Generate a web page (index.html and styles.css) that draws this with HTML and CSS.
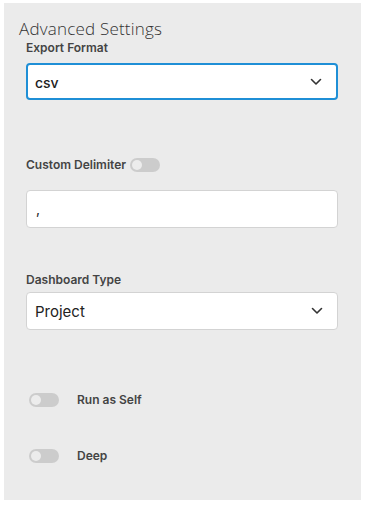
FILE: index.html
```html
<!DOCTYPE html>
<html lang="en">
<head>
    <meta charset="UTF-8">
    <meta name="viewport" content="width=device-width, initial-scale=1.0">
    <title>Advanced Settings</title>
    <link rel="stylesheet" href="styles.css">
</head>
<body>
    <div class="panel">
        <h2 class="panel-title">Advanced Settings</h2>

        <!-- export format -->
        <div class="field">
            <label class="field-label">Export Format</label>
            <div class="select focused">
                <span class="select-value">csv</span>
                <svg class="chevron" width="12" height="8" viewBox="0 0 12 8"><path d="M1.5 1.5 L6 6 L10.5 1.5" fill="none" stroke="#333" stroke-width="1.6" stroke-linecap="round" stroke-linejoin="round"/></svg>
            </div>
        </div>

        <div class="field delimiter">
            <div class="label-row">
                <label class="field-label">Custom Delimiter</label>
                <span class="toggle"></span>
            </div>
            <div class="text-input">,</div>
        </div>

        <div class="field dashboard">
            <label class="field-label">Dashboard Type</label>
            <div class="select">
                <span class="select-value plain">Project</span>
                <svg class="chevron" width="12" height="8" viewBox="0 0 12 8"><path d="M1.5 1.5 L6 6 L10.5 1.5" fill="none" stroke="#333" stroke-width="1.6" stroke-linecap="round" stroke-linejoin="round"/></svg>
            </div>
        </div>

        <div class="switch-row first">
            <span class="toggle"></span>
            <span class="switch-label">Run as Self</span>
        </div>
        <div class="switch-row">
            <span class="toggle"></span>
            <span class="switch-label">Deep</span>
        </div>
    </div>
</body>
</html>
```

FILE: styles.css
```css
body {
    font-family: Inter, "Liberation Sans", sans-serif;
    background-color: #ffffff;
    margin: 0;
    padding: 3px 5px 6px 4px;
}

.panel {
    background-color: #ebebeb;
    height: 497px;
    box-sizing: border-box;
    padding: 15px 23px 0 22px;
}

.panel-title {
    font-family: "Open Sans", sans-serif;
    font-weight: 300;
    font-size: 17px;
    color: #333333;
    margin: 0 0 0 -7px;
    line-height: 22px;
    letter-spacing: 0.2px;
}

.field-label {
    display: block;
    font-size: 12px;
    font-weight: 600;
    color: #444444;
    line-height: 16px;
}

.field {
    display: flex;
    flex-direction: column;
}

.field > .field-label {
    margin-bottom: 7px;
}

.select {
    height: 38px;
    box-sizing: border-box;
    background-color: #ffffff;
    border: 1px solid #d3d3d3;
    border-radius: 4px;
    display: flex;
    align-items: center;
    justify-content: space-between;
    padding: 0 14px 0 8px;
}

.select.focused {
    border: 2px solid #1f8fd6;
    height: 37px;
    padding-left: 7px;
}

.select-value {
    font-size: 14px;
    font-weight: 500;
    color: #222222;
    padding-top: 2px;
}

.select-value.plain {
    font-size: 15px;
    font-weight: 400;
    padding-top: 0;
}

.delimiter {
    margin-top: 57px;
}

.label-row {
    display: flex;
    align-items: center;
    gap: 4px;
    margin-bottom: 17px;
}

.text-input {
    height: 38px;
    box-sizing: border-box;
    background-color: #ffffff;
    border: 1px solid #d3d3d3;
    border-radius: 4px;
    padding: 9px 9px;
    font-size: 14px;
    color: #222222;
}

.dashboard {
    margin-top: 44px;
}

.dashboard > .field-label {
    margin-bottom: 4px;
}

.toggle {
    display: inline-block;
    width: 30px;
    height: 14px;
    border-radius: 7px;
    background-color: #cccccc;
    position: relative;
}

.toggle::after {
    content: "";
    position: absolute;
    left: 2px;
    top: 2px;
    width: 10px;
    height: 10px;
    border-radius: 50%;
    background-color: #ececec;
}

.switch-row {
    display: flex;
    align-items: center;
    gap: 18px;
    padding-left: 3px;
    margin-top: 41px;
}

.switch-row.first {
    margin-top: 62px;
}

.switch-label {
    font-size: 12px;
    font-weight: 600;
    color: #444444;
}
```
